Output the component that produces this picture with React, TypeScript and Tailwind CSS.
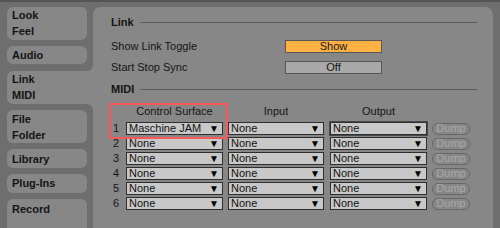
import React from 'react'

const font = { fontFamily: '"Liberation Sans", Arial, sans-serif' }

function Tab({ lines, tall }: { lines: string[]; tall?: boolean }) {
  return (
    <div
      className={`w-[80px] rounded-[6px] bg-[#878787] pl-[5px] text-[11px] font-bold text-[#141414] flex flex-col justify-center ${
        tall ? 'h-[34px]' : 'h-[19px]'
      }`}
    >
      {lines.map((l) => (
        <div key={l} className="leading-[16px]">
          {l}
        </div>
      ))}
    </div>
  )
}

function Gap({ corner }: { corner?: 'top' | 'bottom' }) {
  return (
    <div className="h-[7px] flex">
      <div className="w-[80px]" />
      {corner && (
        <div className="w-[6px] h-full bg-[#878787]">
          <div
            className={`w-full h-full bg-[#6e6e6e] ${
              corner === 'top' ? 'rounded-br-[6px]' : 'rounded-tr-[6px]'
            }`}
          />
        </div>
      )}
    </div>
  )
}

function Select({ value, width, focus }: { value: string; width: string; focus?: boolean }) {
  return (
    <div
      className={`${width} h-[13px] flex items-center justify-between bg-[#c8c8c8] border border-[#2e2e2e] pl-[2px] pr-[3px] text-[11px] leading-none text-[#111] ${
        focus ? 'ring-1 ring-[#4a4a4a]' : ''
      }`}
    >
      <span>{value}</span>
      <span className="text-[10px] text-black">▼</span>
    </div>
  )
}

function SectionHeader({ title }: { title: string }) {
  return (
    <div className="h-[15px] flex items-center gap-[6px] text-[11px] font-bold text-[#141414]">
      <span>{title}</span>
      <div className="flex-1 h-px bg-[#5c5c5c]" />
    </div>
  )
}

export default function App() {
  const rows = [1, 2, 3, 4, 5, 6]
  return (
    <div
      className="w-[500px] h-[228px] overflow-hidden bg-[#6e6e6e] border-t-2 border-[#555555]"
      style={font}
    >
      <div className="flex pt-[5px] h-full">
        {/* Sidebar */}
        <div className="w-[93px] pl-[7px] flex flex-col">
          <Tab lines={['Look', 'Feel']} tall />
          <Gap />
          <Tab lines={['Audio']} />
          <Gap corner="top" />
          <div className="w-[86px] h-[34px] rounded-l-[6px] bg-[#878787] pl-[5px] text-[11px] font-bold text-[#141414] flex flex-col justify-center">
            <div className="leading-[16px]">Link</div>
            <div className="leading-[16px]">MIDI</div>
          </div>
          <Gap corner="bottom" />
          <Tab lines={['File', 'Folder']} tall />
          <Gap />
          <Tab lines={['Library']} />
          <Gap />
          <Tab lines={['Plug-Ins']} />
          <Gap />
          <div className="w-[80px] h-[30px] rounded-t-[6px] bg-[#878787] pl-[5px] pt-[2px] text-[11px] font-bold text-[#141414] leading-[16px]">
            Record
          </div>
        </div>

        {/* Panel */}
        <div className="w-[400px] h-[240px] rounded-t-[8px] bg-[#878787] pl-[18px] pr-[16px] pt-[8px] text-[11px] text-[#141414]">
          <SectionHeader title="Link" />

          <div className="mt-[10px] h-[13px] flex items-center">
            <span className="w-[174px]">Show Link Toggle</span>
            <div className="w-[97px] h-[13px] bg-[#ffb243] border border-[#555] flex items-center justify-center leading-none">
              Show
            </div>
          </div>
          <div className="mt-[8px] h-[13px] flex items-center">
            <span className="w-[174px]">Start Stop Sync</span>
            <div className="w-[97px] h-[13px] bg-[#a9a9a9] border border-[#555] flex items-center justify-center leading-none">
              Off
            </div>
          </div>

          <div className="mt-[8px]">
            <SectionHeader title="MIDI" />
          </div>

          {/* MIDI table */}
          <div className="relative mt-[7px]">
            <div className="h-[14px] flex items-center">
              <div className="w-[15px]" />
              <div className="w-[97px] text-center">Control Surface</div>
              <div className="w-[96px] ml-[5px] text-center">Input</div>
              <div className="w-[97px] ml-[6px] text-center">Output</div>
            </div>
            <div className="mt-[4px] flex flex-col gap-[2px]">
              {rows.map((n) => (
                <div key={n} className="h-[13px] flex items-center">
                  <div className="w-[15px] pl-[2px]">{n}</div>
                  <Select value={n === 1 ? 'Maschine JAM' : 'None'} width="w-[97px]" />
                  <div className="ml-[5px]">
                    <Select value="None" width="w-[96px]" />
                  </div>
                  <div className="ml-[6px]">
                    <Select value="None" width="w-[97px]" focus={n === 1} />
                  </div>
                  <div className="ml-[5px] w-[38px] h-[12px] rounded-full border border-[#676767] text-[#a8a8a8] flex items-center justify-center leading-none">
                    Dump
                  </div>
                </div>
              ))}
            </div>
            {/* highlight */}
            <div className="absolute left-[-2px] top-[-1px] w-[119px] h-[36px] border-2 border-[#ff5757] pointer-events-none" />
          </div>
        </div>
      </div>
    </div>
  )
}
